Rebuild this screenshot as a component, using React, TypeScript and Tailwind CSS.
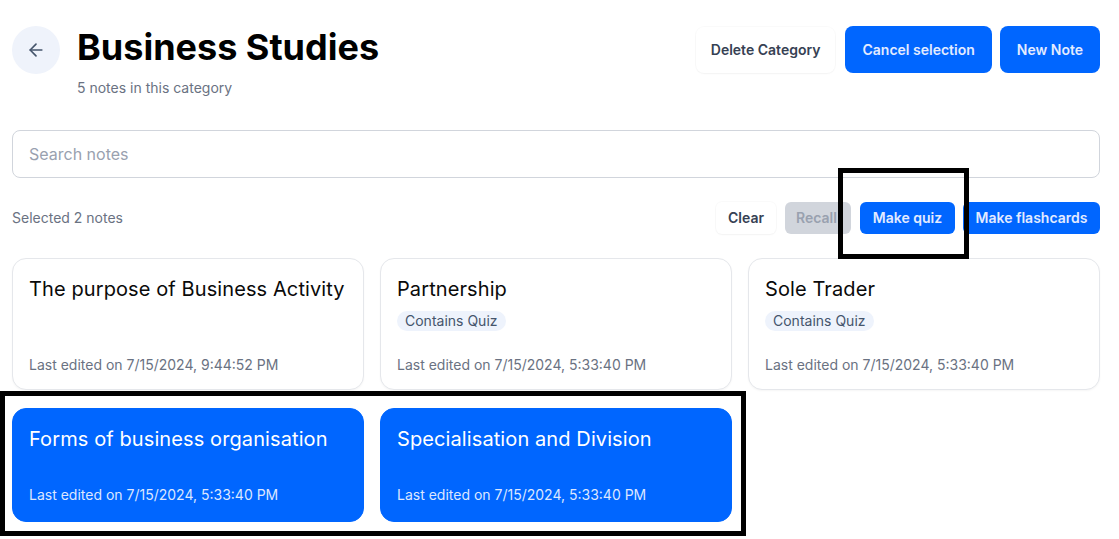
import { ArrowLeft } from "lucide-react";

type Note = {
  title: string;
  edited: string;
  quiz?: boolean;
  selected?: boolean;
};

const notes: Note[] = [
  { title: "The purpose of Business Activity", edited: "7/15/2024, 9:44:52 PM" },
  { title: "Partnership", edited: "7/15/2024, 5:33:40 PM", quiz: true },
  { title: "Sole Trader", edited: "7/15/2024, 5:33:40 PM", quiz: true },
  { title: "Forms of business organisation", edited: "7/15/2024, 5:33:40 PM", selected: true },
  { title: "Specialisation and Division", edited: "7/15/2024, 5:33:40 PM", selected: true },
];

function NoteCard({ note }: { note: Note }) {
  const sel = note.selected;
  return (
    <div
      className={
        sel
          ? "flex flex-col rounded-[14px] border border-[#0066ff] bg-[#0066ff] px-4 pt-4 pb-4 text-white"
          : "flex flex-col rounded-[14px] border border-gray-200 bg-white px-4 pt-4 pb-[14px] shadow-[0_1px_2px_rgba(0,0,0,0.04)]"
      }
    >
      <h3
        className={
          sel
            ? "text-xl leading-7 tracking-[0.1px] text-white"
            : "text-xl leading-7 tracking-[0.1px] text-[#0a0a0a]"
        }
      >
        {note.title}
      </h3>
      {note.quiz && (
        <div className="mt-2 flex">
          <span className="flex h-5 items-center rounded-full bg-[#eef3fc] px-2 text-sm text-slate-600">
            Contains Quiz
          </span>
        </div>
      )}
      <p
        className={
          sel
            ? "mt-auto pt-8 text-sm leading-5 text-[#dce6ff]"
            : "mt-auto pt-6 text-sm leading-5 text-gray-500"
        }
      >
        Last edited on {note.edited}
      </p>
    </div>
  );
}

export default function App() {
  return (
    <div className="relative min-h-[539px] bg-white pl-3 pr-[19px] font-['Inter',sans-serif]">
      {/* header */}
      <header className="flex items-start justify-between pt-[26px]">
        <div className="flex items-start gap-[17px]">
          <button className="flex h-12 w-12 items-center justify-center rounded-full bg-[#eff3fb] text-slate-600">
            <ArrowLeft size={20} strokeWidth={2} />
          </button>
          <div className="pt-px">
            <h1 className="text-4xl leading-10 font-bold text-black">Business Studies</h1>
            <p className="mt-[11px] text-sm leading-5 text-gray-500">5 notes in this category</p>
          </div>
        </div>
        <div className="flex items-center gap-2">
          <button className="mr-0.5 h-[46px] rounded-lg bg-white px-[15px] text-sm font-semibold text-gray-700 shadow-[0_0_0_1px_rgba(0,0,0,0.02),0_1px_2px_rgba(0,0,0,0.03)]">
            Delete Category
          </button>
          <button className="h-[47px] rounded-lg bg-[#0066ff] px-[17px] text-sm font-semibold text-[#e3ebff]">
            Cancel selection
          </button>
          <button className="h-[47px] rounded-lg bg-[#0066ff] px-[17px] text-sm font-semibold text-[#e3ebff]">
            New Note
          </button>
        </div>
      </header>

      {/* search */}
      <input
        placeholder="Search notes"
        className="mt-8 h-12 w-full rounded-lg border border-gray-300 px-4 text-base text-gray-800 outline-none placeholder:text-gray-400"
      />

      {/* selection bar */}
      <div className="mt-6 flex items-center justify-between">
        <p className="text-sm text-gray-500">Selected 2 notes</p>
        <div className="flex items-center gap-[9px]">
          <button className="h-8 w-[60px] rounded-md bg-white text-sm font-semibold text-gray-700 shadow-[0_0_0_1px_rgba(0,0,0,0.02),0_1px_2px_rgba(0,0,0,0.03)]">
            Clear
          </button>
          <button className="h-8 w-[66px] overflow-hidden rounded-md bg-gray-300 pl-[11px] text-left text-sm font-semibold whitespace-nowrap text-gray-400">
            Recall
          </button>
          <button className="h-8 w-[95px] rounded-md bg-[#0066ff] text-sm font-semibold text-[#e3ebff]">
            Make quiz
          </button>
          <button className="ml-[-1px] h-8 w-[137px] rounded-md bg-[#0066ff] text-sm font-semibold text-[#e3ebff]">
            Make flashcards
          </button>
        </div>
      </div>

      {/* notes */}
      <div className="mt-6 grid grid-cols-3 gap-x-4 gap-y-[18px]">
        {notes.map((n) => (
          <NoteCard key={n.title} note={n} />
        ))}
      </div>

      {/* annotation boxes */}
      <div className="pointer-events-none absolute top-[168px] left-[838px] h-[91px] w-[131px] border-[5px] border-black" />
      <div className="pointer-events-none absolute top-[391px] left-0 h-[145px] w-[746px] border-[5px] border-black" />
    </div>
  );
}
